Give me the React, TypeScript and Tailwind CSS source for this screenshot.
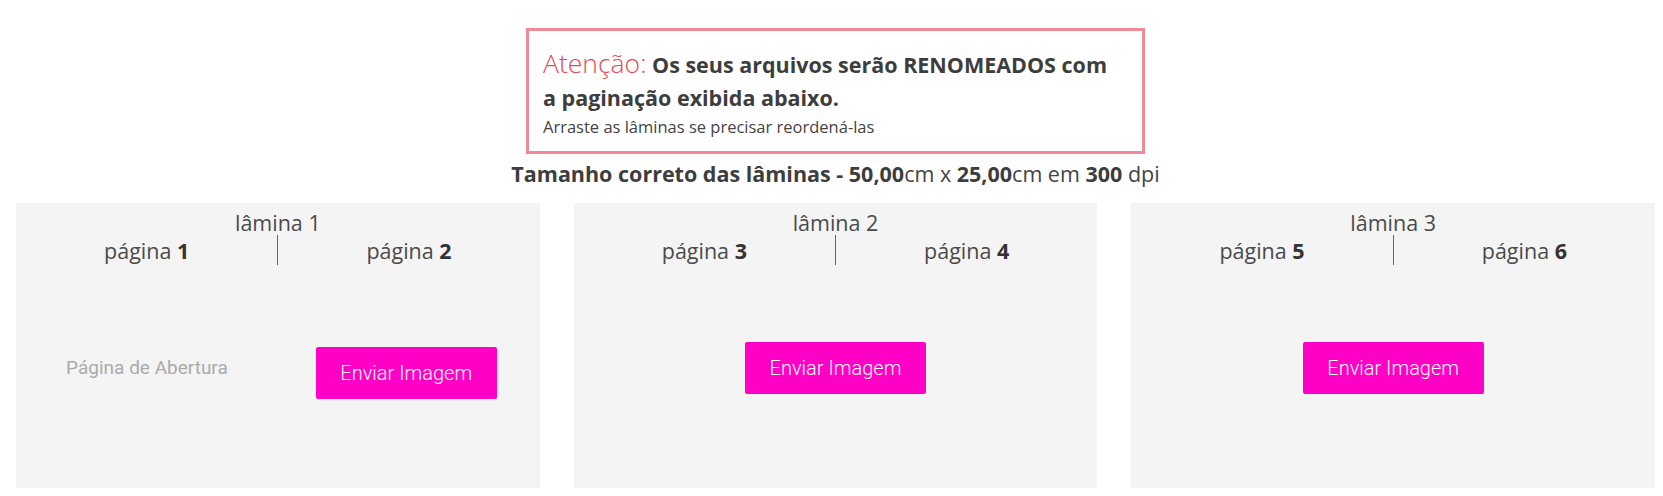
import React from 'react';

interface LaminaProps {
  index: number;
  first?: boolean;
}

const Lamina = ({ index, first }: LaminaProps) => {
  const left = index * 2 - 1;
  const right = index * 2;
  return (
    <div className="flex-1 h-[285px] bg-[#f4f4f4] flex flex-col pt-[7px] text-[#4a4a4a]">
      {/* Header */}
      <p className="text-center text-[21.5px] leading-[26px]">lâmina {index}</p>
      <div className="flex h-[30px] -mt-[1px] items-center">
        <div className="flex-1 text-center text-[21.5px] leading-[29px] pt-[1px]">
          página <b className="font-bold text-[#333]">{left}</b>
        </div>
        <div className="w-px self-stretch bg-[#666]" />
        <div className="flex-1 text-center text-[21.5px] leading-[29px] pt-[1px]">
          página <b className="font-bold text-[#333]">{right}</b>
        </div>
      </div>

      {/* Body */}
      {first ? (
        <div className="flex-1 flex items-center pb-[18px] font-['Roboto',sans-serif]">
          <div className="flex-1 flex justify-center mt-[2px]">
            <span className="text-[19px] text-[#aaa]">Página de Abertura</span>
          </div>
          <div className="flex-1 flex justify-center mt-[10px]">
            <button className="w-[181px] h-[52px] rounded-[2px] bg-[#ff00c6] text-white text-[20px] font-light -ml-[5px]">
              Enviar Imagem
            </button>
          </div>
        </div>
      ) : (
        <div className="flex-1 flex items-center justify-center pb-[17px] font-['Roboto',sans-serif]">
          <button className="w-[181px] h-[52px] rounded-[2px] bg-[#ff00c6] text-white text-[20px] font-light">
            Enviar Imagem
          </button>
        </div>
      )}
    </div>
  );
};

export default function App() {
  return (
    <div className="bg-white min-h-[496px] pl-[16px] pr-[8px] pt-[28px] font-['Open_Sans',sans-serif] text-[#444]">
      {/* Alert */}
      <div className="mx-auto w-[619px] border-[3px] border-[#f08a94] pl-[14px] pr-[8px] pt-[16px] pb-[14px]">
        <p className="text-[21.5px] leading-[33px] font-bold text-[#3d3d3d]">
          <span className="text-[26.5px] font-light text-[#e84a56]">Atenção:</span> Os seus arquivos serão RENOMEADOS com
          <br />a paginação exibida abaixo.
        </p>
        <p className="mt-[2px] text-[16.5px] leading-[21px] text-[#444]">Arraste as lâminas se precisar reordená-las</p>
      </div>

      {/* Size info */}
      <p className="mt-[5px] text-center text-[21.5px] leading-[29px] text-[#444]">
        <b className="font-bold text-[#3d3d3d]">Tamanho correto das lâminas - 50,00</b>cm x{' '}
        <b className="font-bold text-[#3d3d3d]">25,00</b>cm em <b className="font-bold text-[#3d3d3d]">300</b> dpi
      </p>

      {/* Lâminas */}
      <div className="mt-[15px] flex gap-[34px]">
        <Lamina index={1} first />
        <Lamina index={2} />
        <Lamina index={3} />
      </div>
    </div>
  );
}
